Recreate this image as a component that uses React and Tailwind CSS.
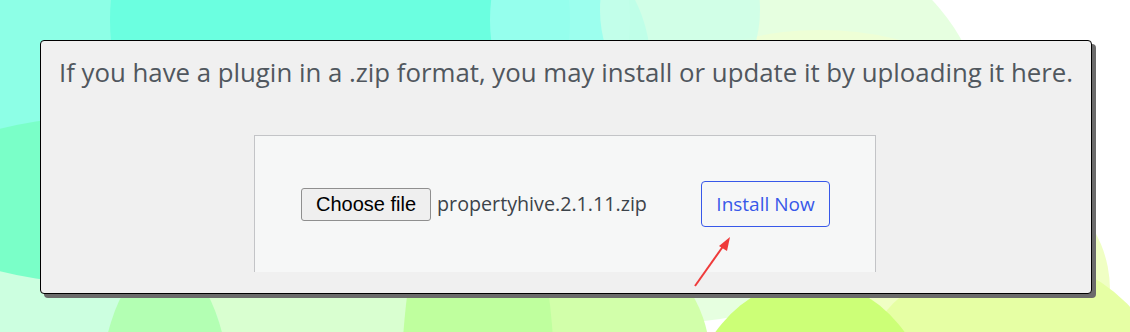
export default function App() {
  return (
    <div className="relative w-[1130px] h-[332px] overflow-hidden bg-white">
      {/* decorative background blobs */}
      <svg className="absolute inset-0" width="1130" height="332" viewBox="0 0 1130 332">
        <rect x="0" y="0" width="1130" height="332" fill="#ffffff" />
        <ellipse cx="640" cy="110" rx="340" ry="215" fill="#e6ffe0" />
        <ellipse cx="820" cy="140" rx="190" ry="110" fill="#eeffd6" />
        <circle cx="990" cy="290" r="120" fill="#f0ffc4" />
        <circle cx="1010" cy="420" r="165" fill="#e6ffa4" />
        <ellipse cx="330" cy="330" rx="260" ry="90" fill="#d9ffd0" />
        <ellipse cx="620" cy="360" rx="90" ry="110" fill="#d2ffaa" />
        <ellipse cx="810" cy="430" rx="125" ry="150" fill="#ccff77" />
        <ellipse cx="478" cy="420" rx="78" ry="300" fill="#bfff9e" />
        <ellipse cx="60" cy="330" rx="160" ry="75" fill="#ccffe0" />
        <ellipse cx="165" cy="400" rx="65" ry="140" fill="#b3ffb3" />
        <ellipse cx="220" cy="60" rx="430" ry="230" fill="#8dffe6" />
        <ellipse cx="120" cy="200" rx="220" ry="85" fill="#7affc8" />
        <circle cx="340" cy="20" r="230" fill="#6bffe0" />
        <ellipse cx="560" cy="20" rx="70" ry="110" fill="#a0fff0" opacity="0.8" />
        <ellipse cx="680" cy="10" rx="80" ry="100" fill="#ccffe8" opacity="0.8" />
      </svg>

      <div className="relative ml-[40px] mt-[40px] w-[1052px] h-[254px] rounded-[4px] border border-black bg-[#f0f0f0] shadow-[4px_4px_0_#6b6b6b] pt-[15px] font-['Open_Sans',sans-serif]">
        <p className="text-center text-[25.8px] leading-[32px] text-[#50575e]">
          If you have a plugin in a .zip format, you may install or update it by uploading it here.
        </p>
        <div className="mt-[47px] ml-[213px] w-[622px] h-[137px] border border-b-0 border-[#c3c4c7] bg-[#f6f7f7] flex items-center justify-between pl-[46px] pr-[45px]">
          <div className="flex items-center">
            <button className="h-[33px] px-[14px] rounded-[3px] border border-[#8f8f8f] bg-[#efefef] text-[20px] text-black font-['Liberation_Sans',sans-serif]">
              Choose file
            </button>
            <span className="ml-[6px] text-[19.7px] text-[#3c434a]">propertyhive.2.1.11.zip</span>
          </div>
          <button className="h-[46px] w-[129px] rounded-[4px] border border-[#3858e9] bg-[#f6f7f7] text-[19px] text-[#3858e9]">
            Install Now
          </button>
        </div>
      </div>

      {/* red annotation arrow */}
      <svg className="absolute left-0 top-0 pointer-events-none" width="1130" height="332">
        <line x1="695" y1="286" x2="724" y2="245" stroke="#ef3b3b" strokeWidth="2" />
        <polygon points="730,237 719,246 727,251" fill="#ef3b3b" />
      </svg>
    </div>
  );
}
